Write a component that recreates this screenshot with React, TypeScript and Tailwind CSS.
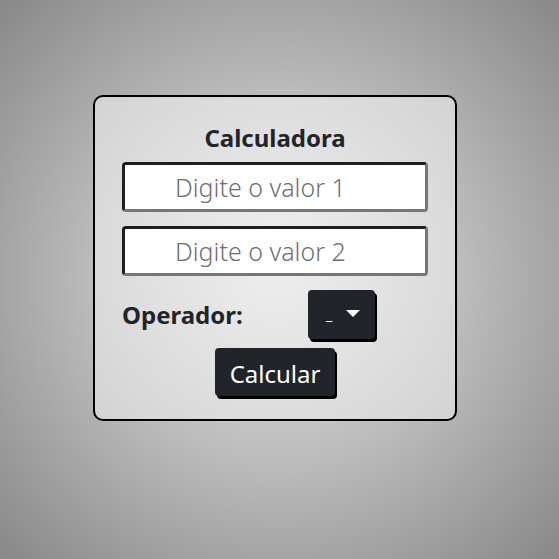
import React from "react";

export default function App() {
  return (
    <div
      className="w-[559px] h-[559px] pt-[95px] pl-[93px] bg-[radial-gradient(circle_at_50%_50%,#e2e2e2_0%,#bdbdbd_45%,#888888_100%)]"
      style={{ fontFamily: "'Noto Sans', 'Open Sans', sans-serif" }}
    >
      <div className="w-[364px] h-[326px] border-2 border-black rounded-[10px] bg-[radial-gradient(circle_at_50%_50%,#efefef_0%,#d3d3d3_100%)] px-[27px] pt-[27px] flex flex-col">
        <h1 className="text-[24px] leading-[1.2] font-bold text-[#212529] text-center">
          Calculadora
        </h1>
        <input
          placeholder="Digite o valor 1"
          className="mt-[9px] w-[306px] h-[50px] bg-white rounded-[4px] border-[3px] border-t-[#1e1e1e] border-l-[#1e1e1e] border-r-[#767676] border-b-[#767676] pl-[50px] text-[25px] font-light placeholder:text-[#6f6f6f] outline-none"
        />
        <input
          placeholder="Digite o valor 2"
          className="mt-[14px] w-[306px] h-[50px] bg-white rounded-[4px] border-[3px] border-t-[#1e1e1e] border-l-[#1e1e1e] border-r-[#767676] border-b-[#767676] pl-[50px] text-[25px] font-light placeholder:text-[#6f6f6f] outline-none"
        />
        <div className="mt-[14px] flex items-center">
          <span className="w-[186px] pt-[2px] text-[24px] font-bold text-[#212529]">Operador:</span>
          <button className="w-[67px] h-[49px] bg-[#212529] rounded-[4px] shadow-[2px_3px_0_#000] flex items-center pl-[18px] text-white">
            <span className="text-[14px] leading-none mt-[2px]">_</span>
            <svg className="ml-[14px]" width="14" height="8" viewBox="0 0 14 8">
              <path d="M0 0 H14 L7 7 Z" fill="#fff" />
            </svg>
          </button>
        </div>
        <div className="mt-[9px] flex justify-center">
          <button className="h-[48px] px-[15px] pt-[5px] bg-[#212529] rounded-[4px] shadow-[2px_3px_0_#000] text-white text-[24px] leading-none">
            Calcular
          </button>
        </div>
      </div>
    </div>
  );
}
